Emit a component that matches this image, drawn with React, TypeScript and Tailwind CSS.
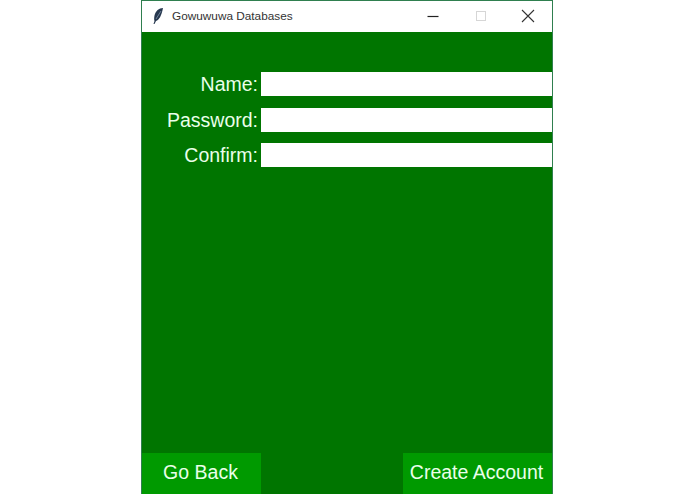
import React from "react";

const rows = [
  { label: "Name:", cls: "mt-0" },
  { label: "Password:", cls: "mt-3" },
  { label: "Confirm:", cls: "mt-[11px]" },
];

export default function App() {
  return (
    <div className="h-[494px] w-[695px] bg-white font-['Liberation_Sans',Arial,sans-serif]">
      <div className="ml-[141px] flex h-[494px] w-[412px] flex-col border-x border-t border-[#2f7f4f]">
        <div className="flex h-[31px] shrink-0 items-center bg-white pb-0.5">
          <svg className="ml-[9px] h-[18px] w-[14px]" viewBox="0 0 14 18">
            <path d="M12 1C8 1 4.5 4 3.5 8.5 3 11 3 13 3.5 14L2.5 17 3.5 17 5 14C8 13 10.5 9 12 1Z" fill="#27384f" />
            <path d="M10 4 5 12" stroke="#8fa3b8" strokeWidth="0.7" />
          </svg>
          <span className="ml-[7px] mt-0.5 text-[11.8px] text-[#333333]">Gowuwuwa Databases</span>
          <div className="ml-auto flex items-center">
            <svg className="mr-[36px] h-3 w-3" viewBox="0 0 12 12">
              <path d="M0.5 6.5H11.5" stroke="#222222" strokeWidth="1.2" />
            </svg>
            <svg className="mr-[34px] h-3 w-3" viewBox="0 0 12 12">
              <rect x="1.5" y="1.5" width="9" height="9" fill="none" stroke="#d6d6d6" />
            </svg>
            <svg className="mr-[17px] h-3.5 w-3.5" viewBox="0 0 14 14">
              <path d="M1 1L13 13M13 1L1 13" stroke="#333333" strokeWidth="1.1" />
            </svg>
          </div>
        </div>
        <div className="flex min-h-0 flex-1 flex-col bg-[#007500]">
          <div className="flex flex-col pt-10">
            {rows.map((r) => (
              <div key={r.label} className={`flex h-6 items-center ${r.cls}`}>
                <span className="w-[116px] text-right text-[19.5px] leading-6 text-[#eaffea]">{r.label}</span>
                <div className="ml-[3px] h-6 flex-1 bg-white" />
              </div>
            ))}
          </div>
          <div className="mt-auto flex h-[41px] items-stretch justify-between">
            <button className="w-[119px] bg-[#009a00] pb-0.5 pr-0.5 text-[19.5px] text-[#eaffea]">Go Back</button>
            <button className="w-[149px] bg-[#009a00] pb-0.5 pr-0.5 text-[19.5px] text-[#eaffea]">Create Account</button>
          </div>
        </div>
      </div>
    </div>
  );
}
